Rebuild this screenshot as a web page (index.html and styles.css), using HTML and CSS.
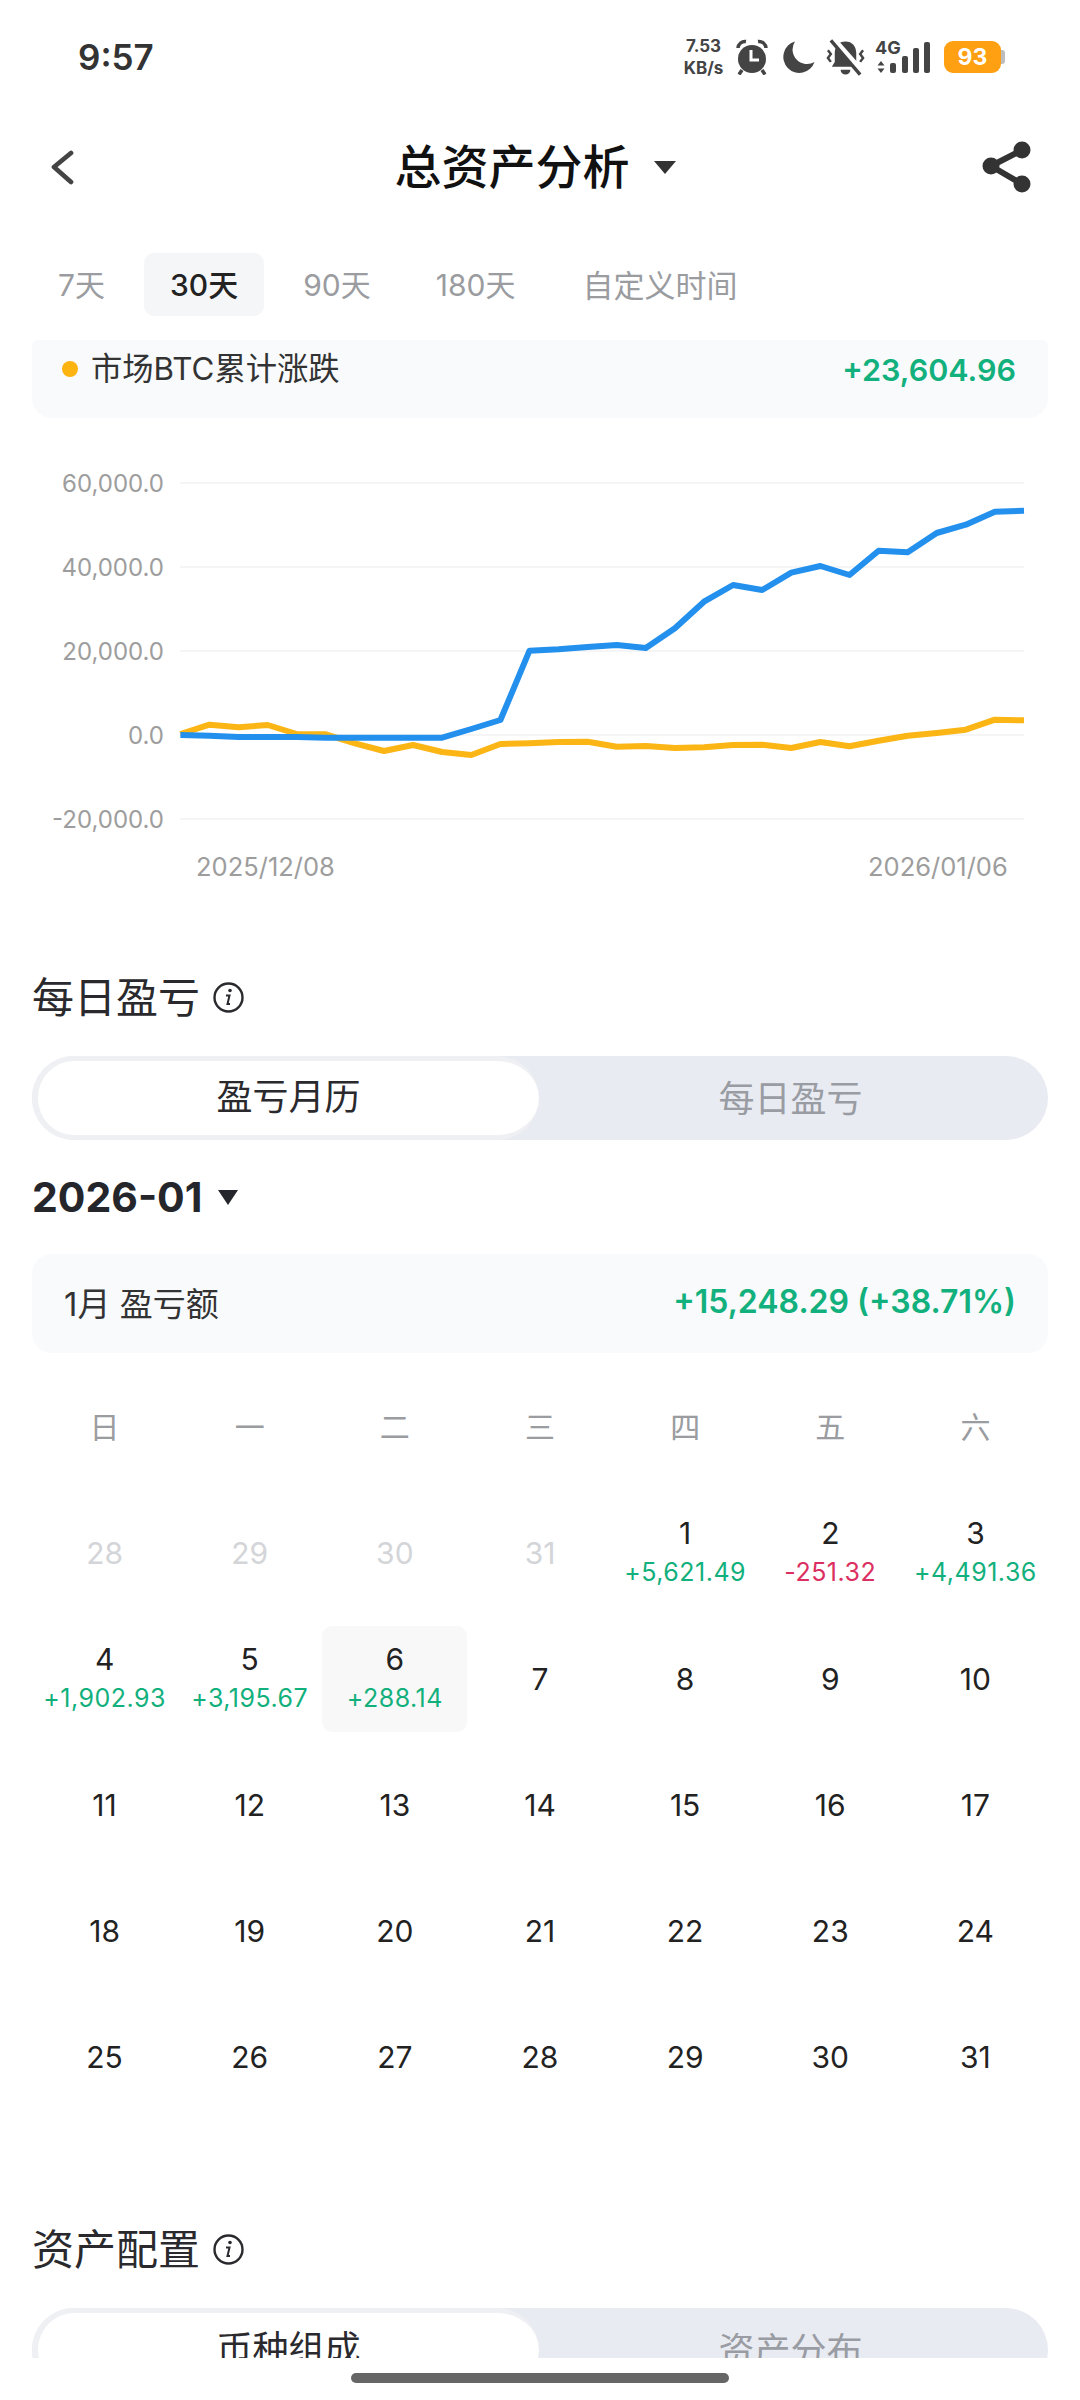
FILE: index.html
```html
<!DOCTYPE html>
<html>
<head>
    <title>总资产分析</title>
    <meta charset="utf-8">
    <link rel="stylesheet" href="styles.css">
</head>
<body>
<div class="page">
    <!-- Status bar -->
    <div class="status">
        <span class="time">9:57</span>
        <div class="status-icons">
            <div class="speed"><span>7.53</span><span>KB/s</span></div>
            <svg class="ic-alarm" width="32" height="36" viewBox="0 0 32 36">
                <circle cx="16" cy="20" r="14" fill="#444"/>
                <path d="M15 11v10h8" fill="none" stroke="#fff" stroke-width="3"/>
                <path d="M2 9a7 7 0 0 1 8-6.500M30 9a7 7 0 0 0-8-6.500M6 31l-3 4.500M26 31l3 4.500" fill="none" stroke="#444" stroke-width="3.500"/>
            </svg>
            <svg class="ic-moon" width="34" height="32" viewBox="0 0 34 32">
                <path d="M14 0.500A16 16 0 1 0 33.500 21A14.500 14.500 0 0 1 14 0.500Z" fill="#444"/>
            </svg>
            <svg class="ic-bell" width="41" height="38" viewBox="0 0 42 38">
                <path d="M21 3c-7 0-11 5-11 12v9l-3 5h28l-3-5v-9c0-7-4-12-11-12zM16 32a5 5 0 0 0 10 0z" fill="#444"/>
                <path d="M3 12l3 4-3 4 3 4M39 12l-3 4 3 4-3 4" fill="none" stroke="#444" stroke-width="2.500"/>
                <path d="M9 2L38 35" stroke="#fff" stroke-width="7"/>
                <path d="M6 2L36 37" stroke="#444" stroke-width="3.500"/>
            </svg>
            <svg class="ic-signal" width="56" height="48" viewBox="875 27 56 48">
                <text x="875" y="54" class="net-text">4G</text>
                <path d="M881 61l3.500 4.500h-7zM881 73l3.500-4.500h-7z" fill="#444"/>
                <rect x="890" y="63" width="6" height="10" rx="2" fill="#444"/>
                <rect x="902" y="56" width="6" height="17" rx="2" fill="#444"/>
                <rect x="913" y="48" width="6" height="25" rx="2" fill="#444"/>
                <rect x="924" y="42" width="6" height="31" rx="2" fill="#444"/>
            </svg>
            <div class="battery"><span>93</span></div>
            <div class="battery-nub"></div>
        </div>
    </div>

    <!-- Title row -->
    <div class="nav">
        <svg class="nav-back" width="24" height="38" viewBox="0 0 24 38">
            <path d="M21 5L4 19l17 15" fill="none" stroke="#444" stroke-width="4.700" stroke-linecap="round" stroke-linejoin="round"/>
        </svg>
        <div class="nav-title"><span class="nav-text">总资产分析</span><span class="caret caret-title"></span></div>
        <svg class="nav-share" width="50" height="52" viewBox="0 0 50 52">
            <path d="M40 9L9 25l31 18" fill="none" stroke="#333" stroke-width="6"/>
            <circle cx="40" cy="9" r="8.500" fill="#333"/>
            <circle cx="9" cy="25" r="8.500" fill="#333"/>
            <circle cx="40" cy="43" r="8.500" fill="#333"/>
        </svg>
    </div>

    <!-- Period tabs -->
    <div class="tabs">
        <div class="tab">7天</div>
        <div class="tab tab-on">30天</div>
        <div class="tab">90天</div>
        <div class="tab">180天</div>
        <div class="tab tab-custom">自定义时间</div>
    </div>

    <div class="legend">
        <div class="legend-name"><span class="dot"></span><span class="legend-text">市场BTC累计涨跌</span></div>
        <div class="up strong">+23,604.96</div>
    </div>

    <!-- Chart, drawn in page coordinates -->
    <svg class="chart" width="1080" height="520" viewBox="0 418 1080 520">
        <g class="grid">
            <line x1="180" y1="483" x2="1024" y2="483"/>
            <line x1="180" y1="567" x2="1024" y2="567"/>
            <line x1="180" y1="651" x2="1024" y2="651"/>
            <line x1="180" y1="735" x2="1024" y2="735"/>
            <line x1="180" y1="819" x2="1024" y2="819"/>
        </g>
        <g class="axis axis-y">
            <text x="164" y="492">60,000.0</text>
            <text x="164" y="576">40,000.0</text>
            <text x="164" y="660">20,000.0</text>
            <text x="164" y="744">0.0</text>
            <text x="164" y="828">-20,000.0</text>
        </g>
        <g class="axis axis-x">
            <text x="196" y="876">2025/12/08</text>
            <text x="868" y="876">2026/01/06</text>
        </g>
        <polyline class="line line-btc" points="180.400,734 209.500,724.700 238.600,727.300 267.700,725 296.800,734 325.900,734.300 354.900,743.300 384,751 413.100,745 442.200,752 471.300,755 500.400,744 529.500,743.300 558.600,742 587.700,741.700 616.800,746.700 645.800,746 674.900,748 704,747.300 733.100,745 762.200,744.700 791.300,748 820.400,742 849.500,746.300 878.600,740.700 907.700,735.700 936.700,733 965.800,729.700 994.900,719.700 1024,720.300"/>
        <polyline class="line line-mine" points="180.400,735 209.500,735.700 238.600,737 267.700,737 296.800,737 325.900,737.700 354.900,737.700 384,737.700 413.100,737.700 442.200,737.700 471.300,729 500.400,720 529.500,650.700 558.600,649.300 587.700,647 616.800,645 645.800,648 674.900,628.300 704,601.700 733.100,585 762.200,590 791.300,572.700 820.400,566 849.500,575 878.600,550.700 907.700,552.300 936.700,533 965.800,524.700 994.900,511.700 1024,510.700"/>
    </svg>

    <!-- Daily profit -->
    <div class="section-title section-daily">
        <span>每日盈亏</span>
        <svg class="info" width="31" height="31" viewBox="0 0 31 31">
            <circle cx="15.500" cy="15.500" r="14" fill="none" stroke="#2a2a2e" stroke-width="2.400"/>
            <circle cx="17" cy="8.500" r="1.800" fill="#2a2a2e"/>
            <path d="M13 13.500h3.500l-2 8.500h2.500" fill="none" stroke="#2a2a2e" stroke-width="2"/>
        </svg>
    </div>
    <div class="seg">
        <div class="seg-on">盈亏月历</div>
        <div class="seg-off">每日盈亏</div>
    </div>

    <div class="month">2026-01<span class="caret caret-month"></span></div>

    <div class="summary">
        <div class="summary-name">1月 盈亏额</div>
        <div class="up summary-value">+15,248.29 (+38.71%)</div>
    </div>

    <div class="weekdays">
        <div>日</div><div>一</div><div>二</div><div>三</div><div>四</div><div>五</div><div>六</div>
    </div>

    <div class="days">
        <div class="day day-off"><b>28</b></div>
        <div class="day day-off"><b>29</b></div>
        <div class="day day-off"><b>30</b></div>
        <div class="day day-off"><b>31</b></div>
        <div class="day"><b>1</b><span class="up">+5,621.49</span></div>
        <div class="day"><b>2</b><span class="down">-251.32</span></div>
        <div class="day"><b>3</b><span class="up">+4,491.36</span></div>
        <div class="day"><b>4</b><span class="up">+1,902.93</span></div>
        <div class="day"><b>5</b><span class="up">+3,195.67</span></div>
        <div class="day day-today"><b>6</b><span class="up">+288.14</span></div>
        <div class="day"><b>7</b></div>
        <div class="day"><b>8</b></div>
        <div class="day"><b>9</b></div>
        <div class="day"><b>10</b></div>
        <div class="day"><b>11</b></div>
        <div class="day"><b>12</b></div>
        <div class="day"><b>13</b></div>
        <div class="day"><b>14</b></div>
        <div class="day"><b>15</b></div>
        <div class="day"><b>16</b></div>
        <div class="day"><b>17</b></div>
        <div class="day"><b>18</b></div>
        <div class="day"><b>19</b></div>
        <div class="day"><b>20</b></div>
        <div class="day"><b>21</b></div>
        <div class="day"><b>22</b></div>
        <div class="day"><b>23</b></div>
        <div class="day"><b>24</b></div>
        <div class="day"><b>25</b></div>
        <div class="day"><b>26</b></div>
        <div class="day"><b>27</b></div>
        <div class="day"><b>28</b></div>
        <div class="day"><b>29</b></div>
        <div class="day"><b>30</b></div>
        <div class="day"><b>31</b></div>
    </div>

    <!-- Asset allocation, cut off by the gesture area -->
    <div class="section-title section-assets">
        <span>资产配置</span>
        <svg class="info" width="31" height="31" viewBox="0 0 31 31">
            <circle cx="15.500" cy="15.500" r="14" fill="none" stroke="#2a2a2e" stroke-width="2.400"/>
            <circle cx="17" cy="8.500" r="1.800" fill="#2a2a2e"/>
            <path d="M13 13.500h3.500l-2 8.500h2.500" fill="none" stroke="#2a2a2e" stroke-width="2"/>
        </svg>
    </div>
    <div class="seg">
        <div class="seg-on">币种组成</div>
        <div class="seg-off">资产分布</div>
    </div>

    <div class="gesture"><div class="gesture-bar"></div></div>
</div>
</body>
</html>
```

FILE: styles.css
```css
body {
    margin: 0;
    background: #fff;
    font-family: Inter, "Noto Sans CJK SC", sans-serif;
    color: #222;
}

.page {
    position: relative;
    width: 1080px;
    height: 2400px;
    overflow: hidden;
}

.up { color: #12b07c; }
.down { color: #dc2f61; }
.strong { font-weight: 600; font-size: 30.5px; }

/* status bar */
.status {
    display: flex;
    align-items: center;
    height: 114px;
    padding: 0 75px 0 78px;
}

.time {
    font-size: 35px;
    font-weight: 600;
    color: #333;
}

.status-icons {
    display: flex;
    align-items: center;
    margin-left: auto;
}

.speed {
    display: flex;
    flex-direction: column;
    align-items: center;
    width: 43px;
    font-size: 17px;
    font-weight: 700;
    line-height: 22px;
    color: #444;
}

.ic-alarm { margin-left: 11px; }
.ic-moon { margin-left: 13px; }
.ic-bell { margin-left: 10px; }
.ic-signal { margin: 0 0 12px 9px; }

.net-text {
    font-size: 18px;
    font-weight: 700;
    fill: #444;
}

.battery {
    display: flex;
    align-items: center;
    justify-content: center;
    width: 57px;
    height: 32px;
    margin-left: 13px;
    border-radius: 9px;
    background: #ff9f12;
    color: #fff;
    font-size: 23px;
    font-weight: 700;
}

.battery-nub {
    width: 4px;
    height: 14px;
    border-radius: 0 3px 3px 0;
    background: #bdbdbd;
}

/* title row */
.nav {
    display: flex;
    align-items: center;
    justify-content: space-between;
    height: 106px;
    padding: 0 48px 0 50px;
}

.nav-title {
    display: flex;
    align-items: center;
    margin-left: 14px;
    font-size: 47px;
    font-weight: 500;
    color: #111;
}

.nav-text { margin-bottom: 8px; }

.caret {
    width: 0;
    height: 0;
    border-style: solid;
    border-color: #333 transparent transparent;
}

.caret-title {
    margin: 0 0 0 24px;
    border-width: 13px 11px 0;
}

/* period tabs */
.tabs {
    display: flex;
    gap: 13px;
    margin: 33px 0 0 32px;
}

.tab {
    padding: 0 26px;
    height: 63px;
    line-height: 65px;
    border-radius: 10px;
    font-size: 30px;
    color: #9a9c9f;
}

.tab-on {
    background: #f5f6f7;
    color: #222;
    font-weight: 500;
}

.tab-custom {
    margin-left: 2px;
    font-size: 31px;
}

.legend {
    display: flex;
    align-items: center;
    justify-content: space-between;
    height: 58px;
    margin: 24px 32px 0;
    padding: 0 32px 20px 30px;
    border-radius: 6px 6px 20px 20px;
    background: #f8fafc;
}

.legend-name {
    display: flex;
    align-items: center;
    font-size: 31.300px;
    color: #333;
}

.legend-text { margin-bottom: 5px; }

.dot {
    width: 16px;
    height: 16px;
    margin-right: 13px;
    border-radius: 50%;
    background: #fdb310;
}

/* chart */
.chart { display: block; }

.grid line {
    stroke: #f5f5f6;
    stroke-width: 2;
}

.axis text {
    font-size: 24px;
    fill: #9d9d9d;
}

.axis-y text { text-anchor: end; }
.axis-x text { font-size: 25.500px; }

.line {
    fill: none;
    stroke-width: 6;
    stroke-linejoin: round;
}

.line-btc { stroke: #fbb515; }
.line-mine { stroke: #2390ee; }

/* sections */
.section-title {
    display: flex;
    align-items: center;
    height: 60px;
    margin-left: 32px;
    font-size: 42px;
    color: #2a2a2e;
}

.section-title span { margin-bottom: 5px; }

.section-daily { margin-top: 29px; }
.section-assets { margin-top: 109px; }

.info { margin-left: 13px; }

.seg {
    display: flex;
    align-items: center;
    height: 84px;
    margin: 29px 32px 0;
    border-radius: 42px;
    background: #e9ebf2;
    font-size: 36px;
}

.seg-on {
    box-sizing: border-box;
    width: 507px;
    height: 84px;
    line-height: 72px;
    text-align: center;
    border: solid #eff0f3;
    border-width: 5px 0 5px 6px;
    border-radius: 42px;
    background: #fff;
    color: #2a2a2e;
}

.seg-off {
    flex: 1;
    padding: 0 6px 4px 0;
    text-align: center;
    color: #999ca3;
}

.month {
    display: flex;
    align-items: center;
    height: 60px;
    margin: 27px 0 0 32px;
    font-size: 41px;
    font-weight: 700;
    color: #24262b;
}

.caret-month {
    margin-left: 16px;
    border-width: 15px 10px 0;
    border-top-color: #24262b;
}

.summary {
    display: flex;
    align-items: center;
    justify-content: space-between;
    box-sizing: border-box;
    height: 99px;
    margin: 27px 32px 0;
    padding: 0 32px 4px;
    border-radius: 20px;
    background: #f8fafc;
}

.summary-name {
    font-size: 33px;
    color: #333;
}

.summary-value {
    font-size: 32px;
    font-weight: 600;
}

/* calendar */
.weekdays,
.days {
    display: grid;
    grid-template-columns: repeat(7, 1fr);
    margin: 0 32px;
}

.weekdays {
    margin-top: 49px;
    height: 50px;
    line-height: 50px;
    text-align: center;
    font-size: 30px;
    color: #9a9c9f;
}

.days {
    grid-auto-rows: 106px;
    row-gap: 20px;
    margin-top: 48px;
}

.day {
    display: flex;
    flex-direction: column;
    align-items: center;
    justify-content: center;
    border-radius: 10px;
}

.day b {
    font-size: 30px;
    font-weight: 400;
    line-height: 40px;
    color: #222;
}

.day span {
    font-size: 25px;
    letter-spacing: 0.500px;
    line-height: 38px;
    margin-bottom: 2px;
}

.day-off b { color: #d3d5d8; }
.day-today { background: #f8f8f8; }

/* gesture area lies over the cut-off content */
.gesture {
    position: absolute;
    left: 0;
    right: 0;
    top: 2358px;
    bottom: 0;
    background: #fff;
}

.gesture-bar {
    width: 378px;
    height: 10px;
    margin: 15px 0 0 351px;
    border-radius: 5px;
    background: #666;
}
```
